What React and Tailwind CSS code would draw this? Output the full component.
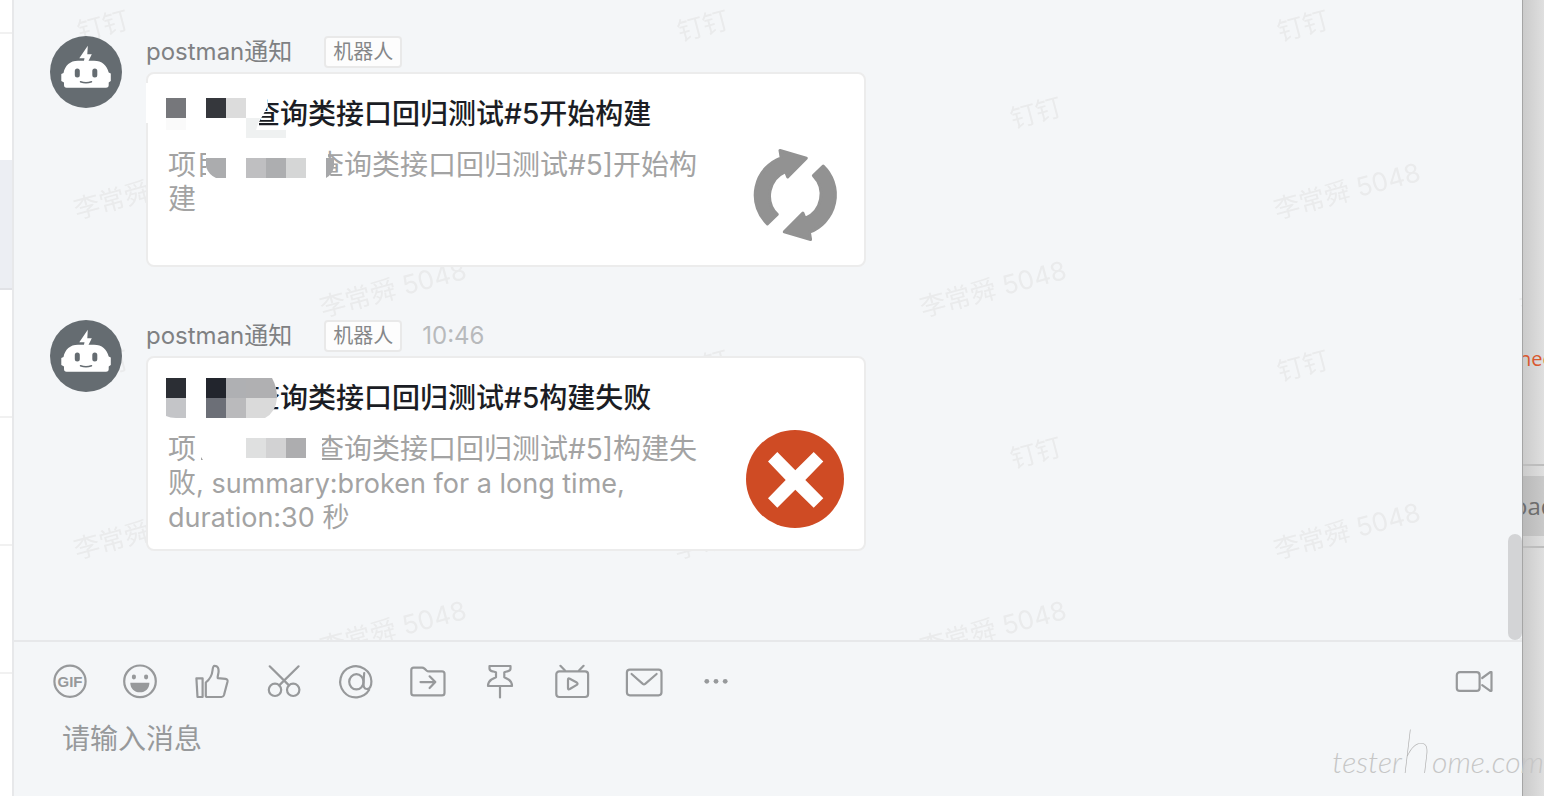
import React from 'react';

const messages = [
  {
    id: 1,
    sender: 'postman通知',
    time: '',
    title: '查询类接口回归测试#5开始构建',
    project: '查询类接口回归测试#5]开始构建',
    detail: '',
    status: 'running'
  },
  {
    id: 2,
    sender: 'postman通知',
    time: '10:46',
    title: '查询类接口回归测试#5构建失败',
    project: '查询类接口回归测试#5]构建失败',
    detail: ', summary:broken for a long time, duration:30 秒',
    status: 'failed'
  }
];

const watermarks = [
  { x: 103, y: 26, text: '钉钉' },
  { x: 436, y: 113, text: '钉钉' },
  { x: 147, y: 191, text: '李常舜 5048' },
  { x: 393, y: 289, text: '李常舜 5048' }
];

const Watermark = () => (
  <svg className="absolute inset-0 h-full w-full" aria-hidden="true">
    <defs>
      <pattern id="watermark" width="600" height="340" x="-14" patternUnits="userSpaceOnUse">
        {watermarks.map((mark, index) => (
          <text
            key={index}
            x={mark.x}
            y={mark.y + 9}
            textAnchor="middle"
            fontSize="26"
            fill="#eaebec"
            transform={`rotate(-15 ${mark.x} ${mark.y})`}
          >
            {mark.text}
          </text>
        ))}
      </pattern>
    </defs>
    <rect width="100%" height="100%" fill="url(#watermark)" />
  </svg>
);

const RobotAvatar = () => (
  <svg className="relative h-18 w-18 shrink-0" viewBox="0 0 72 72" aria-hidden="true">
    <circle cx="36" cy="36" r="36" fill="#656c71" />
    <path d="M37.8 9.8L29.3 22.3H34.5L33.5 27H37.5L41.8 18.3H37.3Z" fill="#fff" />
    <path d="M13.5 37C15 29.5 20 24.8 28 24.8H44C52 24.8 57 29.5 58.7 36.5L60.8 37.5V45L58.7 46.5V49Q58.7 51.8 56 51.8H16.5Q14 51.8 14 49V46.5L11.3 45V38Z" fill="#fff" />
    <rect x="24.8" y="32.6" width="5" height="9" rx="2.5" fill="#656c71" />
    <rect x="42.3" y="32.6" width="5" height="9" rx="2.5" fill="#656c71" />
    <path d="M30.5 45.8Q36 47.8 41.5 45.8" fill="none" stroke="#656c71" strokeWidth="1.5" strokeLinecap="round" />
  </svg>
);

const RunningIcon = () => (
  <svg className="h-[98px] w-[98px] shrink-0" viewBox="0 0 98 98" fill="#929292" stroke="#929292" strokeWidth="3" strokeLinejoin="round" aria-hidden="true">
    <path d="M34 4.5L60.3 12.2L41.7 31L39.5 25.5A26.5 26.5 0 0 0 31.2 68.4L21.4 77.8A39.8 39.8 0 0 1 35.2 11.8Z" />
    <path d="M34 4.5L60.3 12.2L41.7 31L39.5 25.5A26.5 26.5 0 0 0 31.2 68.4L21.4 77.8A39.8 39.8 0 0 1 35.2 11.8Z" transform="rotate(180 49.3 49)" />
  </svg>
);

const FailedIcon = () => (
  <svg className="h-[98px] w-[98px] shrink-0" viewBox="0 0 98 98" aria-hidden="true">
    <circle cx="49" cy="49" r="49" fill="#cf4b24" />
    <path d="M31.3 22L49.3 40.3L67.7 22L77.3 31.5L59.3 50L77.3 68.3L67.7 77.7L49.3 59.7L31.3 77.7L22 68.3L39.7 50L22 31.5Z" fill="#fff" />
  </svg>
);

// Mosaic that hides the project name
const RunningMosaic = () => (
  <svg className="absolute -top-0.5 -left-0.5 h-30 w-48" viewBox="0 0 192 120" aria-hidden="true">
    <path d="M0 11H3V51H0Z" fill="#fff" />
    <path d="M6 10H119L122 34L113 50V58H6Z" fill="#fff" />
    <rect x="20" y="26" width="20" height="20" fill="#76777b" />
    <rect x="20" y="46" width="20" height="12" fill="#fafafa" />
    <rect x="60" y="26" width="20" height="20" fill="#35373c" />
    <rect x="80" y="26" width="20" height="20" fill="#dcdcdc" />
    <path d="M100 46H114L110 58H140V66H100Z" fill="#eff1f1" />
    <path d="M60 76H182V98L188 112H60Z" fill="#fff" />
    <path d="M60 86H80V106H70Q63 103 60 95Z" fill="#abacae" />
    <rect x="100" y="86" width="20" height="20" fill="#bfbfc1" />
    <rect x="120" y="86" width="20" height="20" fill="#adaeb0" />
    <rect x="140" y="86" width="20" height="20" fill="#d5d6d6" />
    <path d="M180 86H188V94Q187 102 180 106Z" fill="#a6a7a9" />
  </svg>
);

const FailedMosaic = () => (
  <svg className="absolute -top-0.5 -left-0.5 h-30 w-48" viewBox="0 0 192 120" aria-hidden="true">
    <path d="M100 22H126Q131 31 131 42L127 46V58H20V22Z" fill="#fff" />
    <rect x="20" y="22" width="20" height="20" fill="#2b2e34" />
    <path d="M20 42H40V62H30Q24 62 20 60Z" fill="#c4c5c8" />
    <rect x="60" y="22" width="20" height="20" fill="#22252d" />
    <rect x="60" y="42" width="20" height="20" fill="#6c6f77" />
    <rect x="80" y="22" width="20" height="20" fill="#afb0b3" />
    <path d="M100 22H126Q131 31 131 42H100Z" fill="#b0b0b2" />
    <rect x="80" y="42" width="20" height="20" fill="#bababc" />
    <path d="M100 42H131Q130 56 119 62H100Z" fill="#dadada" />
    <path d="M51 74H176V112H51Z" fill="#fff" />
    <path d="M55 101L57 104H55Z" fill="#a3a3a3" />
    <rect x="100" y="82" width="20" height="20" fill="#dfe0e0" />
    <rect x="120" y="82" width="20" height="20" fill="#d2d2d3" />
    <rect x="140" y="82" width="20" height="20" fill="#adadaf" />
  </svg>
);

const MessageCard = ({ message }) => (
  <div className="relative mt-1 rounded-lg border-2 border-[#ececec] bg-white pt-5 pr-5 pb-[15px] pl-5">
    <h3 className="text-[28px] leading-10 font-medium text-[#1b1d24]">
      <span className="inline-block w-21" />
      {message.title}
    </h3>
    <div className="mt-3 flex items-start justify-between gap-4">
      <p className="mt-0.5 min-h-[102px] w-[532px] text-[28px] leading-[34px] text-[#a3a3a3]">
        项目
        <span className="inline-block w-[92px]" />
        {message.project}
        {message.detail && <span className="text-[27px] leading-7">{message.detail}</span>}
      </p>
      {message.status === 'running' ? <RunningIcon /> : <FailedIcon />}
    </div>
    {message.status === 'running' ? <RunningMosaic /> : <FailedMosaic />}
  </div>
);

const Message = ({ message }) => (
  <article className="relative flex items-start gap-6">
    <RobotAvatar />
    <div className="w-full max-w-[720px]">
      <header className="flex h-8 items-center">
        <span className="text-2xl leading-8 text-[#7f8183]">{message.sender}</span>
        <span className="ml-8 flex h-8 items-center rounded border-2 border-[#e9e9e9] bg-[#fdfdfd] px-[7px] text-xl text-[#858789]">
          机器人
        </span>
        {message.time && <time className="ml-5 text-2xl leading-8 text-[#b8babc]">{message.time}</time>}
      </header>
      <MessageCard message={message} />
    </div>
  </article>
);

const tools = [
  {
    label: 'GIF',
    icon: (
      <>
        <circle cx="22" cy="20.3" r="15.6" />
        <text x="22" y="25.5" textAnchor="middle" fontSize="15" fontWeight="bold" fill="#97999b" stroke="none" fontFamily="Liberation Sans">GIF</text>
      </>
    )
  },
  {
    label: '表情',
    icon: (
      <>
        <circle cx="20" cy="20.3" r="15.8" />
        <g fill="#97999b" stroke="none">
          <ellipse cx="13.9" cy="16" rx="2.1" ry="2.4" />
          <ellipse cx="26.1" cy="16" rx="2.1" ry="2.4" />
          <path d="M10.3 21.7H29.4C29.4 27.5 25.5 31.3 19.9 31.3S10.3 27.5 10.3 21.7Z" />
        </g>
      </>
    )
  },
  {
    label: '赞',
    icon: (
      <>
        <path d="M4.4 17.3H10.6V36H5.5Z" />
        <path d="M13.8 34.5V21.5C17.5 18.5 20 15 20.5 9.5C20.8 6.5 21 4.8 22.5 4.8C26 4.8 26.7 7.5 26.6 10.5C26.5 13.5 25.2 15 25.8 17.2L33.5 17.8Q36 18.2 35.5 20.8L32 34Q31.4 36 29.5 36H15.3Q13.8 36 13.8 34.5Z" />
      </>
    )
  },
  {
    label: '截图',
    icon: (
      <>
        <circle cx="11" cy="28.8" r="6.2" />
        <circle cx="29.2" cy="28.8" r="6.2" />
        <path d="M5.7 5.3L25 24.4M34.6 5.3L15.2 24.4" />
      </>
    )
  },
  {
    label: '提及',
    icon: (
      <>
        <path d="M33.2 28.8A15.6 15.6 0 1 1 35.4 20.3C35.4 25 33.8 28 31 28C28.2 28 27.2 25.5 27.5 21L28.2 12" />
        <ellipse cx="20.4" cy="20.8" rx="7.2" ry="7.6" />
      </>
    )
  },
  {
    label: '文件',
    icon: (
      <>
        <path d="M3.3 9Q3.3 6.6 5.8 6.6H14Q15.3 6.6 16.5 7.6L18.5 9.5Q19.5 10.4 21 10.4H34Q36.5 10.4 36.5 12.8V32Q36.5 34.4 34 34.4H5.8Q3.3 34.4 3.3 32Z" />
        <path d="M12.5 21.1H27.3M21.6 15.3L27.3 21.1L21.6 27" />
      </>
    )
  },
  {
    label: '钉一下',
    icon: (
      <>
        <path d="M9.5 5H30.5V7.5Q30.5 9.8 27.5 10.3L24.3 11.3V16.3L28.5 18.5Q31.8 20.5 32 25H8Q8.2 20.5 11.5 18.5L16 16.3V11.3L12.5 10.3Q9.5 9.8 9.5 7.5Z" />
        <path d="M20 25V36.5" />
      </>
    )
  },
  {
    label: '直播',
    icon: (
      <>
        <rect x="4.3" y="10.3" width="31.8" height="25.7" rx="3" />
        <path d="M8.4 4.8L13 9.5M31.6 4.8L27 9.5" />
        <path d="M16 18.8Q16 16.8 17.8 17.8L24.8 21.5Q26.3 22.7 24.8 23.9L17.8 28Q16 29 16 27Z" />
      </>
    )
  },
  {
    label: '邮件',
    icon: (
      <>
        <rect x="2.9" y="8.6" width="34.6" height="25.7" rx="3" />
        <path d="M7.6 13L18.8 22.8Q20 23.8 21.2 22.8L32.6 13" />
      </>
    )
  },
  {
    label: '更多',
    icon: (
      <g fill="#97999b" stroke="none">
        <circle cx="10.8" cy="20.3" r="2.4" />
        <circle cx="20" cy="20.3" r="2.4" />
        <circle cx="29.2" cy="20.3" r="2.4" />
      </g>
    )
  }
];

const ToolButton = ({ label, children }) => (
  <button type="button" aria-label={label} className="h-10 w-10 shrink-0">
    <svg viewBox="0 0 40 40" className="h-10 w-10" fill="none" stroke="#97999b" strokeWidth="2.2" strokeLinecap="round" strokeLinejoin="round">
      {children}
    </svg>
  </button>
);

const Composer = () => (
  <section className="shrink-0 border-t-2 border-[#e7e8ea] pt-[19px]">
    <div className="flex items-center gap-8 pr-7 pl-[34px]">
      {tools.map((tool) => (
        <ToolButton key={tool.label} label={tool.label}>{tool.icon}</ToolButton>
      ))}
      <div className="flex-1" />
      <ToolButton label="视频会议">
        <rect x="2.8" y="11.2" width="22.8" height="18.7" rx="3" />
        <path d="M28.2 17L36.2 11.2H37.5V29.8H36.2L28.2 24.2" />
      </ToolButton>
    </div>
    <textarea
      aria-label="消息"
      placeholder="请输入消息"
      className="mt-[18px] block h-[77px] w-full resize-none bg-transparent px-12 text-[28px] leading-10 outline-none placeholder:text-[#97999b]"
    />
  </section>
);

const ConversationList = () => (
  <aside className="w-3 shrink-0 bg-white">
    <div className="h-[34px] border-b-2 border-[#f1f1f1]" />
    <div className="h-[126px]" />
    <div className="h-[130px] border-b-2 border-[#e1e2e6] bg-[#eceef3]" />
    <div className="h-32 border-b-2 border-[#f1f1f1]" />
    <div className="h-32 border-b-2 border-[#f1f1f1]" />
    <div className="h-32 border-b-2 border-[#f1f1f1]" />
  </aside>
);

const BackgroundWindow = () => (
  <aside className="w-[22px] shrink-0 overflow-hidden border-l border-[#a5a5a5] bg-linear-to-r from-[#cbcbcb] to-[#dfdfdf] font-['Open_Sans',sans-serif]">
    <div className="h-[466px] border-b-2 border-[#bdbdbd] pt-[343px]">
      <div className="-ml-1 text-xl leading-8 text-[#d9582f]">nec</div>
    </div>
    <div className="my-2.5 flex h-15 items-center bg-linear-to-r from-[#b9b9b9] to-[#c9c9c9]">
      <span className="-ml-2.5 text-2xl text-[#6d6d6d]">oad</span>
    </div>
    <div className="border-t-2 border-[#bdbdbd]" />
  </aside>
);

const App = () => {
  return (
    <div className="relative flex h-screen overflow-hidden bg-[#f4f6f8] font-[Inter,'Noto_Sans_CJK_SC',sans-serif]">
      <ConversationList />
      <main className="flex min-w-0 flex-1 flex-col border-l-2 border-[#e7e8ea]">
        <section className="relative min-h-0 flex-1 overflow-hidden">
          <Watermark />
          <div className="flex flex-col gap-[53px] pt-9 pr-9 pl-9">
            {messages.map((message) => (
              <Message key={message.id} message={message} />
            ))}
          </div>
          {/* Scrollbar */}
          <div className="absolute right-0 bottom-0 h-[106px] w-3.5 rounded-full bg-[#d3d4d6]" />
        </section>
        <Composer />
      </main>
      <BackgroundWindow />
      <div className="absolute right-0 bottom-4 font-[Lato,sans-serif] text-3xl font-light whitespace-nowrap text-[#c6c6c6] italic">
        tester<span className="text-6xl font-thin text-[#b0b0b0]">h</span>ome.com
      </div>
    </div>
  );
};

export default App;
